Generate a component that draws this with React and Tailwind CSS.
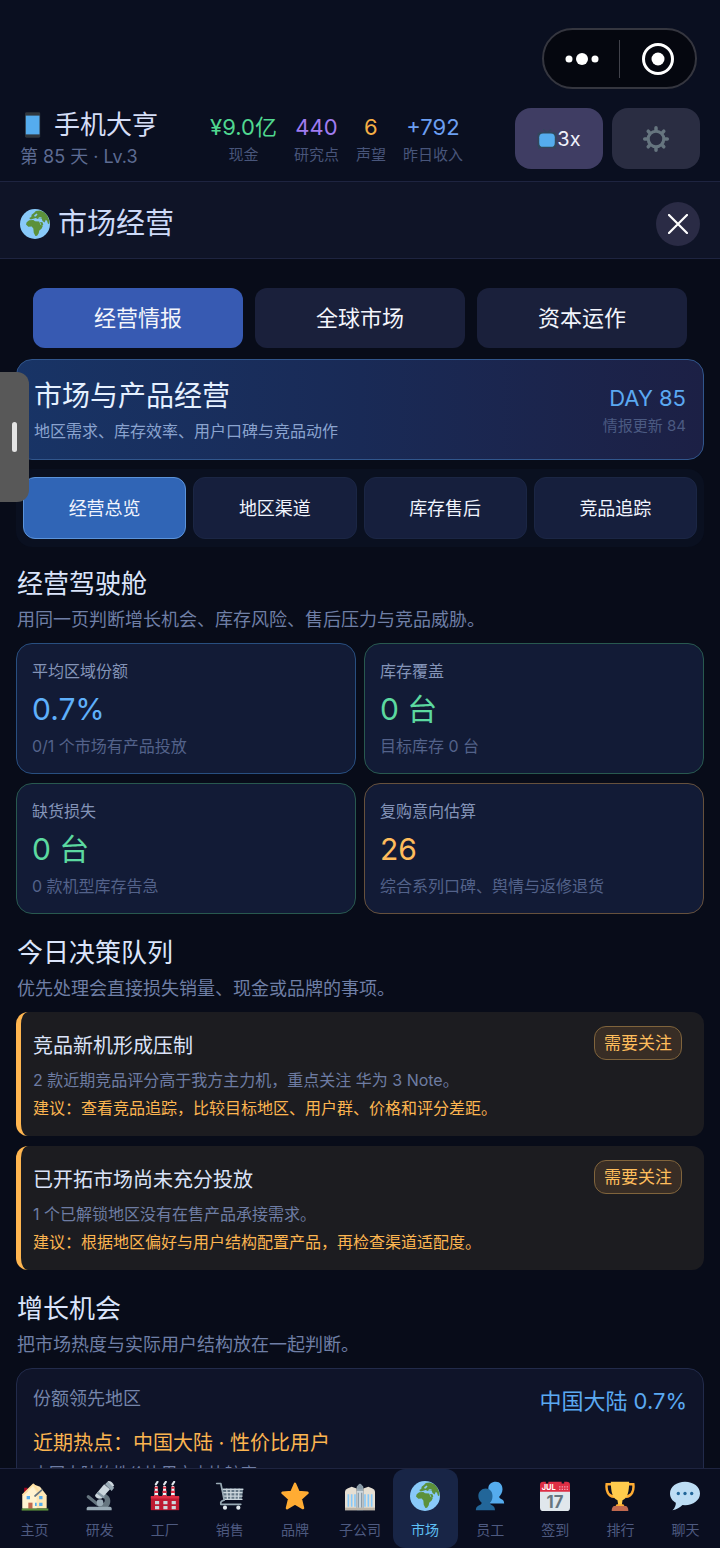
import { useState } from "react";

/* Icons */
function Emoji({ className = "size-[30px]", children }) {
  return (
    <svg viewBox="0 0 36 36" className={`shrink-0 ${className}`} aria-hidden="true">
      {children}
    </svg>
  );
}

function PhoneIcon() {
  return (
    <Emoji className="size-[26px]">
      <path fill="#31373d" d="M7 2.500q0-2 2-2h17q2 0 2 2v31q0 2-2 2H9q-2 0-2-2z" />
      <path fill="#55acee" d="M8 5h19v26H8z" />
    </Emoji>
  );
}

function TvIcon() {
  return (
    <Emoji className="size-5">
      <path stroke="#31475c" strokeWidth="2" strokeLinecap="round" d="M18 7l-6-6M18 7l7-6M5 33l-2 2M31 33l2 2" />
      <rect x="1" y="6" width="34" height="28" rx="5" fill="#31475c" />
      <rect x="4" y="8" width="28" height="24" rx="7" fill="#55acee" />
    </Emoji>
  );
}

function GearIcon() {
  return (
    <Emoji className="size-7">
      <g fill="none" stroke="#66757f">
        <circle cx="18" cy="18" r="10" strokeWidth="4" />
        <path
          strokeWidth="4.500"
          strokeLinecap="round"
          d="M18 6V3.500M18 30v2.500M6 18H3.500M30 18h2.500M9.500 9.500L8 8M26.500 26.500L28 28M26.500 9.500L28 8M9.500 26.500L8 28"
        />
      </g>
    </Emoji>
  );
}

function GlobeIcon() {
  return (
    <Emoji>
      <circle cx="18" cy="18" r="18" fill="#88c9f9" />
      <g fill="#5c913b">
        <path d="M8 16l3-2.500 5-.2 2 1.500 5 .2 1.500 4 3 1.200-1.500 3.300-3 2.500-.5 3-2 3-2 .5-2-4-.5-5-2-2.500-4 .2-2.800-2.700z" />
        <path d="M11.500 10.500l2-1 .5-2.500 3-2.500 2-2 5-.7 5 2 4 4.500 2.300 6-.3 4-1.500-1-1-3-1.500-1.500-1.500 3.500-2.500-2-1-2.800-3.500-.5-1.500 1-2-1.200-3 .8-3 1-1.500-1z" />
        <path d="M24 15.500l3 .5 1 3-2 1z" />
      </g>
      <path fill="#88c9f9" d="M17 7.500l3-2 1 1.200-2 2.200-1.700.2zM22.500 9.800l3.500.2-.5 1.200-3-.2z" />
    </Emoji>
  );
}

function HouseIcon() {
  return (
    <Emoji>
      <path fill="#ffe8b6" d="M3 17L16 4l8 3 8 10v16H3z" />
      <path fill="#fff3d0" d="M3 18L15 5l5 9v19H3z" />
      <path fill="#a0041e" d="M5 8h4v4l-4 4z" />
      <path fill="none" stroke="#ffe0a0" strokeWidth="2" strokeLinejoin="round" d="M3 17L16 4l6 8" />
      <path fill="none" stroke="#66757f" strokeWidth="2" strokeLinecap="round" d="M18 18l8-7" />
      <path fill="#c1694f" d="M10 26h5v8h-5z" />
      <path fill="#55acee" d="M8 18h4v4H8zM23 18h4v4h-4zM23 26h4v4h-4zM18 26h2v4h-2z" />
      <path fill="#5c913b" d="M2 33h32v2.500H2z" />
    </Emoji>
  );
}

function MicroscopeIcon() {
  return (
    <Emoji>
      <path fill="none" stroke="#66757f" strokeWidth="4" strokeLinecap="round" d="M4 19l11 9" />
      <path fill="#66757f" d="M24 15c8 4 8 12 3 17H16v-4c8 0 10-5 5-9z" />
      <path fill="#99aab5" d="M4 31h26q2 0 2 2v2H2v-2q0-2 2-2z" />
      <circle cx="18" cy="26" r="4" fill="#99aab5" />
      <path fill="#ccd6dd" d="M12 17L23 4l7 6-10 11q-7 1-8-4z" />
      <path fill="#8899a6" d="M16 13l8 6-2 2-8-6z" />
      <path fill="#99aab5" d="M24 4l3-3 8 7-3 4z" />
      <path fill="#ccd6dd" d="M28 0q5 0 7 6l-2 1-6-6z" />
    </Emoji>
  );
}

function FactoryIcon() {
  return (
    <Emoji>
      <path fill="#f4f7f9" d="M6 6l-1 14h5L9 6zM16 6l-1 14h5L19 6zM26 6l-1 14h5L29 6z" />
      <path stroke="#dd2e44" strokeWidth="2.500" d="M5.500 8h4M5 13h5M5 18h5M15.500 8h4M15 13h5M15 18h5M25.500 8h4M25 13h5M25 18h5" />
      <path stroke="#e1e8ed" strokeWidth="2.500" strokeLinecap="round" d="M7 4l2-3M17 4l2-3M27 4l2-3" />
      <path fill="#be1931" d="M1 19h34v16H1z" />
      <path fill="#dd2e44" d="M1 18h34v3H1z" />
      <path fill="#ccd6dd" d="M6 24h5v4H6zM16 24h5v4h-5zM26 24h5v4h-5zM6 30h5v4H6zM16 30h5v4h-5zM26 30h5v4h-5z" />
    </Emoji>
  );
}

function CartIcon() {
  return (
    <Emoji>
      <path fill="#657786" d="M9 9h25l-2 13H11z" />
      <path stroke="#ccd6dd" strokeWidth="1.500" d="M8 10h26M9 14h24M10 18h23M11 22h22M14 9l1 13M19 9v13M24 9v13M29 9l-1 13" />
      <path
        fill="none"
        stroke="#99aab5"
        strokeWidth="2"
        strokeLinecap="round"
        strokeLinejoin="round"
        d="M2 3h5l4 20q-5 1-4 5h24"
      />
      <circle cx="12" cy="32" r="2.500" fill="#e1e8ed" />
      <circle cx="28" cy="32" r="2.500" fill="#e1e8ed" />
    </Emoji>
  );
}

function StarIcon() {
  return (
    <Emoji>
      <path
        fill="#ffac33"
        stroke="#ffac33"
        strokeWidth="3"
        strokeLinejoin="round"
        d="M18 3.500l4.200 9.700 10.800 1-8 7.300 2.600 11L18 26.800 8.400 32.500l2.600-11-8-7.300 10.800-1z"
      />
    </Emoji>
  );
}

function OfficeIcon() {
  return (
    <Emoji>
      <path fill="#99aab5" d="M14 7l4-4 4 4v28h-8z" />
      <path fill="#e6dfd3" d="M0 13q0-3 3-4l5-2 6 2v26H0zM22 9l6-2 5 2q3 1 3 4v22H22z" />
      <path fill="#8899a6" d="M15 6q3-5 6 0v4h-6z" />
      <path fill="#ccd6dd" d="M14 12h8v23h-8z" />
      <path stroke="#88c9f9" strokeWidth="2" d="M4 16v15M8 16v15M12 16v15M24 16v15M28 16v15M32 16v15" />
      <path stroke="#8899a6" strokeWidth="1.500" d="M16 14v18M20 14v18" />
      <path fill="#bdb5a8" d="M0 32h36v3H0z" />
    </Emoji>
  );
}

function PeopleIcon() {
  return (
    <Emoji>
      <path fill="#55acee" d="M25 1c5 0 8 4 8 9 0 4-2 7-4 9 0 3 6 2 6 8H17V18c-1-2-2-5-1-9 0-5 4-8 9-8z" />
      <path fill="#226699" d="M13 9c5 0 8 4 8 9 0 4-1 6-3 8 0 4 6 2 6 9H1c0-7 7-5 7-9-2-2-4-4-4-8 0-5 4-9 9-9z" />
    </Emoji>
  );
}

function CalendarIcon() {
  return (
    <Emoji>
      <path fill="#e0e7ec" d="M0 10h36v22q0 4-4 4H4q-4 0-4-4z" />
      <path fill="#dd2e44" d="M4 1h3v2h3V1h16v2h3V1h3q4 0 4 4v8H0V5q0-4 4-4z" />
      <g fontFamily="Inter, sans-serif" fontWeight="700">
        <text x="2" y="11" fontSize="9" fill="#fff">JUL</text>
        <text x="18" y="32" fontSize="20" fill="#66757f" textAnchor="middle">17</text>
      </g>
      <path stroke="#f4abba" strokeWidth="1.500" strokeDasharray="1.500 1.500" d="M23 7h11M23 10h11" />
    </Emoji>
  );
}

function TrophyIcon() {
  return (
    <Emoji>
      <path fill="none" stroke="#ffac33" strokeWidth="3" d="M9 4H2c-1 8 2 14 9 15M27 4h7c1 8-2 14-9 15" />
      <path fill="#ffcc4d" d="M7 1h22c0 12-2 20-8 22l-1 7h-4l-1-7C9 21 7 13 7 1z" />
      <path fill="#ffac33" d="M14 28h8l2 3H12z" />
      <path fill="#c1694f" d="M11 30h14q3 1 3 6H8q0-5 3-6z" />
    </Emoji>
  );
}

function ChatIcon() {
  return (
    <Emoji>
      <path fill="#bdddf4" d="M18 1c10 0 18 6 18 14s-8 14-18 14l-3-.2C12 32 8 34 3 35c3-3 4-6 4-9-4-2-7-6-7-11C0 7 8 1 18 1z" />
      <g fill="#226699">
        <circle cx="10" cy="15" r="2" />
        <circle cx="18" cy="15" r="2" />
        <circle cx="26" cy="15" r="2" />
      </g>
    </Emoji>
  );
}

/* Data */
const stats = [
  { label: "现金", value: "¥9.0亿", color: "text-[#50d890]" },
  { label: "研究点", value: "440", color: "text-[#a07cf0]" },
  { label: "声望", value: "6", color: "text-[#f5ae45]" },
  { label: "昨日收入", value: "+792", color: "text-[#6c9ff2]" },
];

const mainTabs = ["经营情报", "全球市场", "资本运作"];
const subTabs = ["经营总览", "地区渠道", "库存售后", "竞品追踪"];

const metrics = [
  { label: "平均区域份额", value: "0.7%", note: "0/1 个市场有产品投放", color: "text-[#5fb0fb]", border: "border-[#284f80]" },
  { label: "库存覆盖", value: "0 台", note: "目标库存 0 台", color: "text-[#5cd9a0]", border: "border-[#28594f]" },
  { label: "缺货损失", value: "0 台", note: "0 款机型库存告急", color: "text-[#5cd9a0]", border: "border-[#28594f]" },
  { label: "复购意向估算", value: "26", note: "综合系列口碑、舆情与返修退货", color: "text-[#ffbc5c]", border: "border-[#66513d]" },
];

const decisions = [
  {
    title: "竞品新机形成压制",
    text: "2 款近期竞品评分高于我方主力机，重点关注 华为 3 Note。",
    advice: "建议：查看竞品追踪，比较目标地区、用户群、价格和评分差距。",
  },
  {
    title: "已开拓市场尚未充分投放",
    text: "1 个已解锁地区没有在售产品承接需求。",
    advice: "建议：根据地区偏好与用户结构配置产品，再检查渠道适配度。",
  },
];

const navItems = [
  { label: "主页", Icon: HouseIcon },
  { label: "研发", Icon: MicroscopeIcon },
  { label: "工厂", Icon: FactoryIcon },
  { label: "销售", Icon: CartIcon },
  { label: "品牌", Icon: StarIcon },
  { label: "子公司", Icon: OfficeIcon },
  { label: "市场", Icon: GlobeIcon },
  { label: "员工", Icon: PeopleIcon },
  { label: "签到", Icon: CalendarIcon },
  { label: "排行", Icon: TrophyIcon },
  { label: "聊天", Icon: ChatIcon },
];

/* Sections */
function Header() {
  return (
    <header className="shrink-0 border-b border-[#1e2440] bg-[#0a0f20] pt-7 pb-3">
      <div className="flex justify-end pr-[23px]">
        <div className="flex h-[61px] w-[155px] items-center rounded-full border-2 border-[#35363f] bg-[#05070f]">
          <button aria-label="更多" className="flex flex-1 items-center justify-center">
            <svg viewBox="0 0 34 14" className="h-[14px] w-[34px]" fill="#fff">
              <circle cx="4" cy="7" r="3.500" />
              <circle cx="17" cy="7" r="6" />
              <circle cx="30" cy="7" r="3.500" />
            </svg>
          </button>
          <div className="h-[38px] w-px bg-[#41424b]" />
          <button aria-label="关闭小程序" className="flex flex-1 items-center justify-center">
            <svg viewBox="0 0 32 32" className="size-8">
              <circle cx="16" cy="16" r="14.500" fill="none" stroke="#fff" strokeWidth="3" />
              <circle cx="16" cy="16" r="6.500" fill="#fff" />
            </svg>
          </button>
        </div>
      </div>

      <div className="mt-[19px] flex items-center justify-between px-5">
        <div>
          <h1 className="flex items-center gap-2 text-[26px] leading-8 text-[#d5def7]">
            <PhoneIcon />
            手机大亨
          </h1>
          <p className="mt-1 text-[18px] leading-6 text-[#5d6b92]">第 85 天 · Lv.3</p>
        </div>

        <dl className="flex gap-[17px] text-center">
          {stats.map((s) => (
            <div key={s.label} className="flex flex-col-reverse">
              <dt className="text-[15px] leading-6 text-[#48557a]">{s.label}</dt>
              <dd className={`text-[22px] leading-8 ${s.color}`}>{s.value}</dd>
            </div>
          ))}
        </dl>

        <div className="flex gap-[9px]">
          <button className="flex h-[61px] w-[88px] items-center justify-center rounded-2xl bg-[#3f3d63] text-xl text-[#eef0fa]">
            <TvIcon />
            3x
          </button>
          <button aria-label="设置" className="flex h-[61px] w-[88px] items-center justify-center rounded-2xl bg-[#2a2d42]">
            <GearIcon />
          </button>
        </div>
      </div>
    </header>
  );
}

function TitleBar() {
  return (
    <div className="flex shrink-0 items-center justify-between border-b border-[#1e2440] bg-[#0f1427] px-5 pt-5 pb-3">
      <h2 className="flex items-center gap-2 text-[29px] leading-[44px] text-[#cddaf8]">
        <GlobeIcon />
        市场经营
      </h2>
      <button aria-label="关闭" className="flex size-11 items-center justify-center rounded-full bg-[#2a2b45]">
        <svg viewBox="0 0 20 20" className="size-5" stroke="#fff" strokeWidth="2.200" strokeLinecap="round">
          <path d="M1 1l18 18M19 1L1 19" />
        </svg>
      </button>
    </div>
  );
}

function SectionTitle({ title, desc }) {
  return (
    <div className="mb-[11px] pl-px">
      <h3 className="text-[26px] leading-9 text-[#dbe5fb]">{title}</h3>
      <p className="mt-[6px] text-[18px] leading-6 text-[#6f7fa6]">{desc}</p>
    </div>
  );
}

function MetricCard({ label, value, note, color, border }) {
  return (
    <div className={`rounded-2xl border bg-[#121b36] px-[15px] py-[15px] ${border}`}>
      <p className="text-base leading-6 text-[#8494b8]">{label}</p>
      <p className={`mt-1 text-[30px] leading-[44px] ${color}`}>{value}</p>
      <p className="mt-[3px] text-base leading-6 text-[#53628a]">{note}</p>
    </div>
  );
}

function DecisionCard({ title, text, advice }) {
  return (
    <div className="rounded-xl border-l-5 border-[#ffb650] bg-[#1c1c20] py-[14px] pr-[22px] pl-3">
      <div className="flex items-start justify-between">
        <h4 className="text-xl leading-10 text-[#dbe3f8]">{title}</h4>
        <span className="rounded-xl border border-[#80643c] bg-[#382d25] px-[9px] text-[17px] leading-8 text-[#ffbe5c]">
          需要关注
        </span>
      </div>
      <p className="text-base leading-7 text-[#6e7ca3]">{text}</p>
      <p className="text-base leading-7 text-[#fcb550]">{advice}</p>
    </div>
  );
}

export default function App() {
  const [mainTab, setMainTab] = useState("经营情报");
  const [subTab, setSubTab] = useState("经营总览");
  const [page, setPage] = useState("市场");

  return (
    <div
      lang="zh-CN"
      className="relative flex h-screen flex-col overflow-hidden bg-[#080c19] font-['Inter','Noto_Sans_CJK_SC',sans-serif]"
    >
      <Header />
      <TitleBar />

      <main className="min-h-0 flex-1 overflow-hidden px-4 pt-[29px]">
        {/* Main tabs */}
        <div className="grid grid-cols-3 gap-3 px-[17px]">
          {mainTabs.map((tab) => (
            <button
              key={tab}
              onClick={() => setMainTab(tab)}
              className={`h-[60px] rounded-xl text-[22px] text-[#f3f5fc] ${
                tab === mainTab ? "bg-[#375ab2]" : "bg-[#1a203b]"
              }`}
            >
              {tab}
            </button>
          ))}
        </div>

        {/* Hero */}
        <div className="mt-[11px] flex items-center justify-between rounded-2xl border border-[#31568c] bg-linear-to-r from-[#183466] via-[#192a56] to-[#1c2045] px-[17px] py-4">
          <div>
            <h2 className="text-[28px] leading-10 text-[#e5f0ff]">市场与产品经营</h2>
            <p className="mt-[3px] text-base leading-6 text-[#8aa3cf]">地区需求、库存效率、用户口碑与竞品动作</p>
          </div>
          <div className="text-right">
            <p className="text-[22px] leading-8 text-[#5ba9f2]">DAY 85</p>
            <p className="text-[15px] leading-6 text-[#4b5a82]">情报更新 84</p>
          </div>
        </div>

        {/* Sub tabs */}
        <div className="mt-[9px] grid grid-cols-4 gap-[7px] rounded-2xl bg-[#0a1020] px-[7px] py-2">
          {subTabs.map((tab) => (
            <button
              key={tab}
              onClick={() => setSubTab(tab)}
              className={`h-[62px] rounded-xl border text-[18px] text-[#f0f4fd] ${
                tab === subTab ? "border-[#5b93da] bg-[#3065b6]" : "border-[#1b2644] bg-[#161f3d]"
              }`}
            >
              {tab}
            </button>
          ))}
        </div>

        <section className="mt-[19px]">
          <SectionTitle title="经营驾驶舱" desc="用同一页判断增长机会、库存风险、售后压力与竞品威胁。" />
          <div className="grid grid-cols-2 gap-x-2 gap-y-[9px]">
            {metrics.map((m) => (
              <MetricCard key={m.label} {...m} />
            ))}
          </div>
        </section>

        <section className="mt-[21px]">
          <SectionTitle title="今日决策队列" desc="优先处理会直接损失销量、现金或品牌的事项。" />
          <div className="flex flex-col gap-[10px]">
            {decisions.map((d) => (
              <DecisionCard key={d.title} {...d} />
            ))}
          </div>
        </section>

        <section className="mt-[21px]">
          <SectionTitle title="增长机会" desc="把市场热度与实际用户结构放在一起判断。" />
          <div className="rounded-2xl border border-[#222b4b] bg-[#0f1429] px-4 py-[14px]">
            <div className="flex items-start justify-between">
              <p className="text-[18px] leading-8 text-[#7585ab]">份额领先地区</p>
              <p className="text-[22px] leading-9 text-[#5ba9f2]">中国大陆 0.7%</p>
            </div>
            <p className="mt-2 text-xl leading-8 text-[#fcb550]">近期热点：中国大陆 · 性价比用户</p>
            <p className="text-base leading-7 text-[#6e7ca3]">中国大陆的性价比用户占比较高。</p>
          </div>
        </section>
      </main>

      {/* Bottom nav */}
      <nav className="flex h-20 shrink-0 border-t border-[#1e2440] bg-[#0a0e20] px-[2px]">
        {navItems.map(({ label, Icon }) => (
          <button
            key={label}
            onClick={() => setPage(label)}
            className={`flex flex-1 flex-col items-center gap-[7px] rounded-xl pt-3 text-sm leading-6 ${
              label === page ? "bg-[#182546] text-[#5fc0f5]" : "text-[#4e5a80]"
            }`}
          >
            <Icon />
            {label}
          </button>
        ))}
      </nav>

      {/* Side drawer handle */}
      <button
        aria-label="侧边栏"
        className="absolute top-[372px] left-0 flex h-[130px] w-[29px] items-center justify-center rounded-r-xl bg-[#585858]"
      >
        <span className="h-[30px] w-[5px] rounded-full bg-[#e4e4e4]" />
      </button>
    </div>
  );
}
